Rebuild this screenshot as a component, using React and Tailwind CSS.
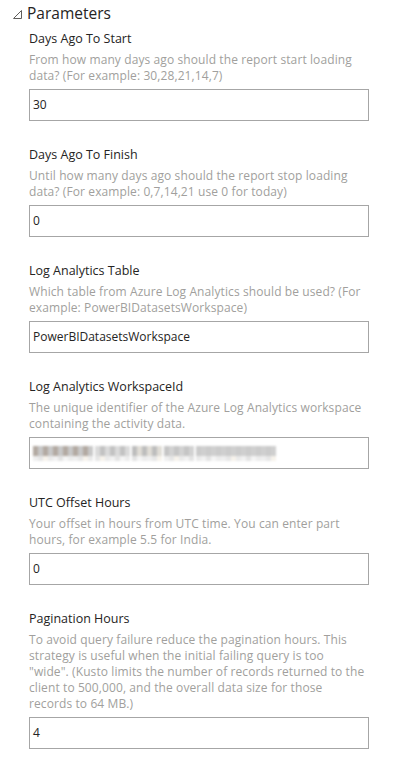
const PARAMS = [
  {
    label: 'Days Ago To Start',
    desc: ['From how many days ago should the report start loading', 'data? (For example: 30,28,21,14,7)'],
    value: '30',
  },
  {
    label: 'Days Ago To Finish',
    desc: ['Until how many days ago should the report stop loading', 'data? (For example: 0,7,14,21 use 0 for today)'],
    value: '0',
  },
  {
    label: 'Log Analytics Table',
    desc: ['Which table from Azure Log Analytics should be used? (For', 'example: PowerBIDatasetsWorkspace)'],
    value: 'PowerBIDatasetsWorkspace',
  },
  {
    label: 'Log Analytics WorkspaceId',
    desc: ['The unique identifier of the Azure Log Analytics workspace', 'containing the activity data.'],
    blurred: true,
  },
  {
    label: 'UTC Offset Hours',
    desc: ['Your offset in hours from UTC time. You can enter part', 'hours, for example 5.5 for India.'],
    value: '0',
  },
  {
    label: 'Pagination Hours',
    desc: [
      'To avoid query failure reduce the pagination hours. This',
      'strategy is useful when the initial failing query is too',
      '"wide". (Kusto limits the number of records returned to the',
      'client to 500,000, and the overall data size for those',
      'records to 64 MB.)',
    ],
    value: '4',
  },
];

// pixelated guid, groups of cells separated by light "dashes"
const GROUPS = [12, 7, 6, 6, 16];
const TOP = ['#c8c8c8', '#b9b9b9', '#d2d2d2', '#c2c2c2', '#aeb8c4', '#cfcfcf', '#bdbdbd', '#b3aaa2', '#d6d6d6', '#c5c5c5', '#dadada', '#b7b7b7', '#cbcbcb', '#e0ddd6'];
const BOT = ['#ececec', '#f2f2f2', '#e6e6e6', '#f5f5f5', '#eaeaea', '#efefef', '#e3e3e3', '#f7f3ec'];

function Blurred() {
  let n = 0;
  return (
    <div className="flex items-stretch gap-[2px] blur-[0.8px]">
      {GROUPS.map((g, gi) => (
        <div key={gi} className="flex">
          {Array.from({ length: g }).map((_, i) => {
            n += 1;
            const t = TOP[(n * 7 + gi * 3) % TOP.length];
            const b = BOT[(n * 5 + gi) % BOT.length];
            return (
              <span key={i} className="flex w-[5px] flex-col">
                <span className="h-[10px]" style={{ backgroundColor: t }} />
                <span className="h-[5px]" style={{ backgroundColor: b }} />
              </span>
            );
          })}
        </div>
      ))}
    </div>
  );
}

function Param({ label, desc, value, blurred }) {
  return (
    <div className="flex flex-col">
      <div className="text-[12.5px] leading-[17px] text-[#252423]">{label}</div>
      <div className="mt-[5px] text-[12px] leading-[16px] tracking-[0.1px] text-[#a19f9d]">
        {desc.map((line) => (
          <div key={line} className="whitespace-nowrap">{line}</div>
        ))}
      </div>
      <div className="mt-[5px] flex h-[32px] items-center border border-[#a6a6a6] bg-white px-[3px] text-[12px] text-[#252423]">
        {blurred ? <Blurred /> : value}
      </div>
    </div>
  );
}

export default function App() {
  return (
    <div
      className="min-h-screen bg-white"
      style={{ fontFamily: '"Open Sans", "Noto Sans", sans-serif' }}
    >
      <div className="flex h-[26px] items-center gap-[5px] pl-[13px] pt-[2px]">
        <svg width="9" height="9" viewBox="0 0 9 9" className="mt-[1px]">
          <path d="M8.5 0.5 L8.5 8.5 L0.5 8.5 Z" fill="none" stroke="#605e5c" strokeWidth="1" />
        </svg>
        <span className="text-[15.5px] text-[#252423]">Parameters</span>
      </div>
      <div className="flex w-[369px] flex-col gap-[25px] pl-[29px] pt-[4px]">
        {PARAMS.map((p) => (
          <Param key={p.label} {...p} />
        ))}
      </div>
    </div>
  );
}
